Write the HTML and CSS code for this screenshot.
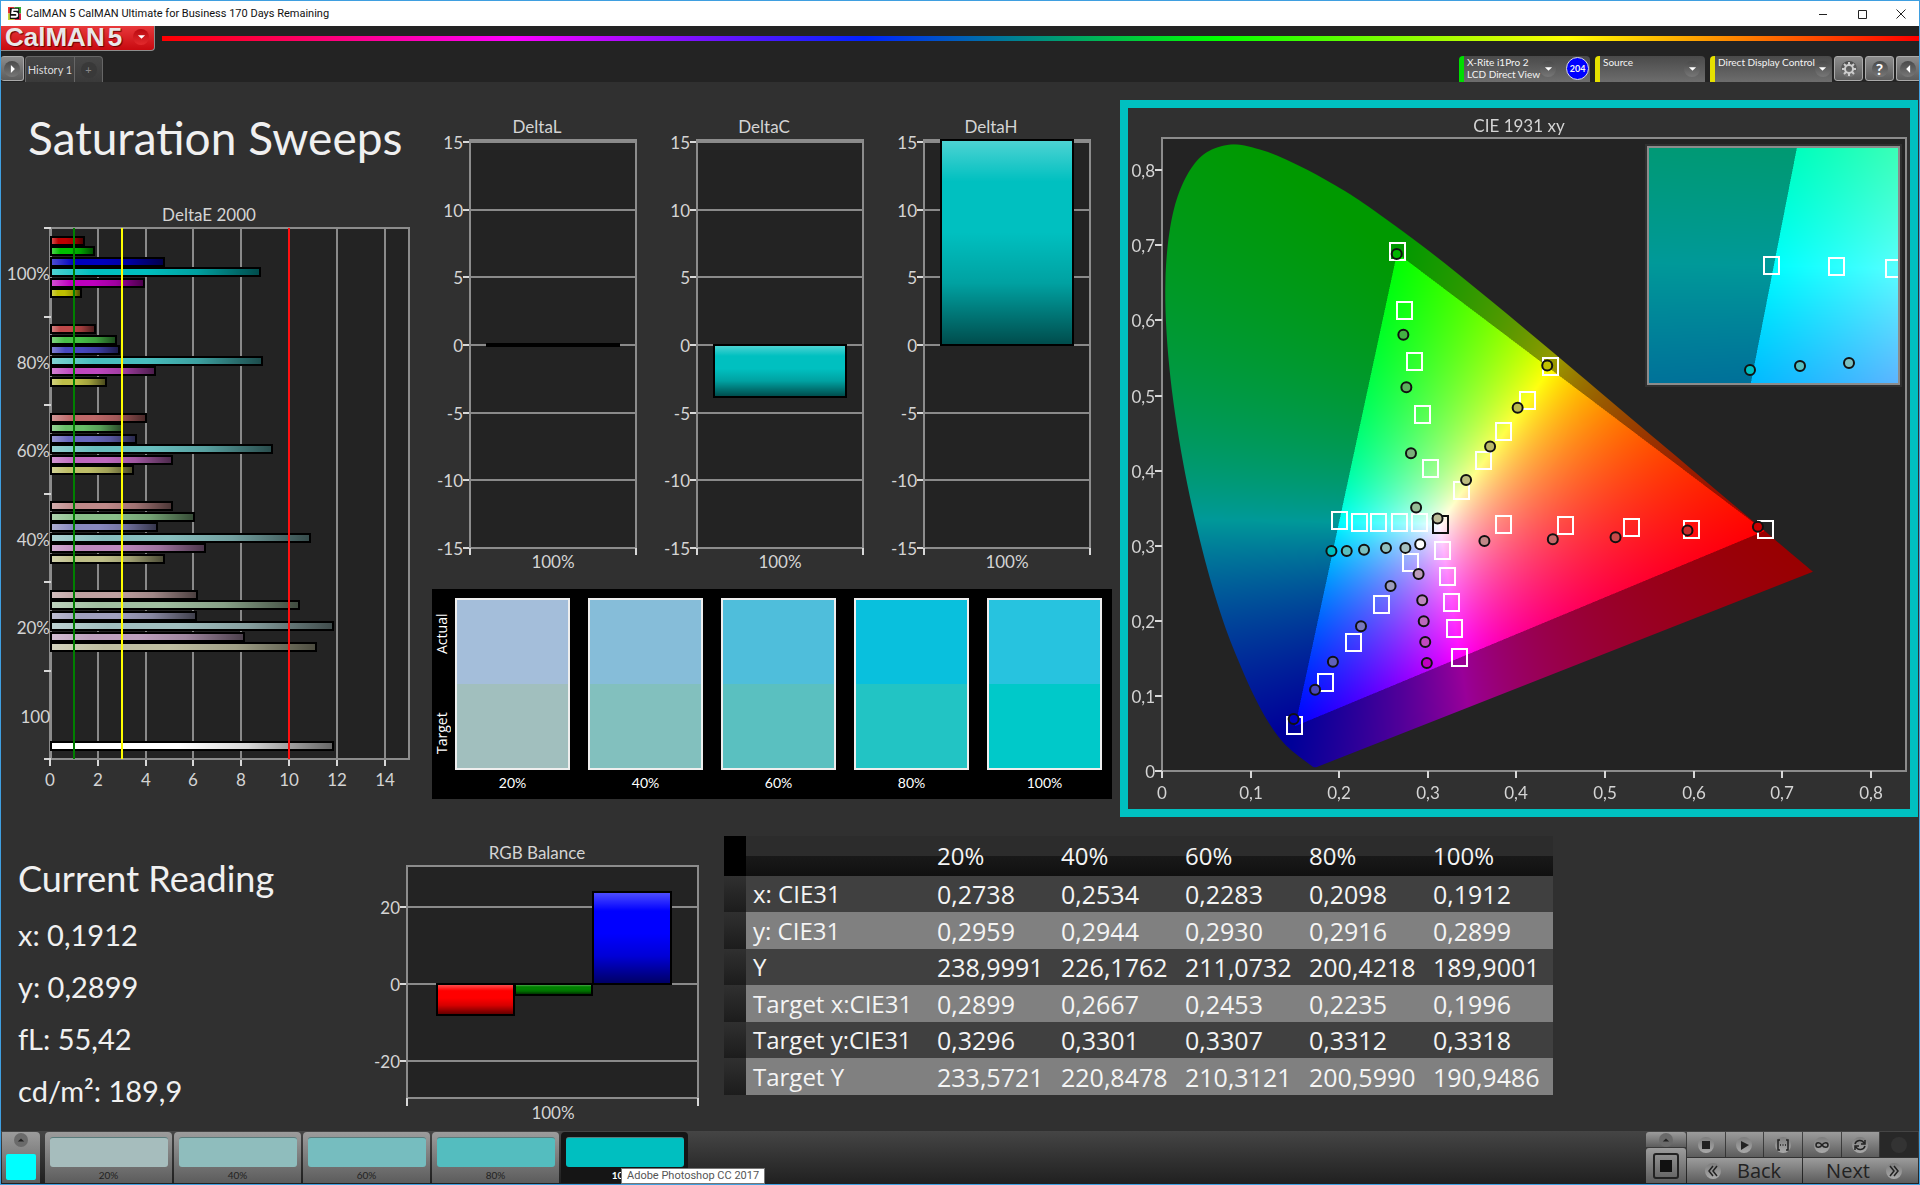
FILE: index.html
```html
<!DOCTYPE html>
<html lang="en">
<head>
<meta charset="utf-8">
<title>CalMAN 5</title>
<link rel="stylesheet" href="styles.css">
</head>
<body>
<header class="titlebar">
  <svg class="app-icon" viewBox="0 0 14 14" aria-hidden="true"><path fill="#e33" d="M0 0h7v7H0z"/><path fill="#3a3" d="M7 0h7v7H7z"/><path fill="#c4d43a" d="M0 7h7v7H0z"/><path fill="#d24" d="M7 7h7v7H7z"/><path fill="#111" d="M2 1h10v12H2z"/><path fill="none" stroke="#fff" stroke-width="2" d="M11 3H5L4.500 6.500H8q2 0 2 2t-2 2H3"/></svg>
  <span class="window-title">CalMAN 5 CalMAN Ultimate for Business 170 Days Remaining</span>
  <div class="window-buttons">
    <button aria-label="Minimize"><svg viewBox="0 0 10 10"><path d="M1 5.500h8"/></svg></button>
    <button aria-label="Maximize"><svg viewBox="0 0 10 10"><path d="M1.500 1.500h8v8h-8z"/></svg></button>
    <button aria-label="Close"><svg viewBox="0 0 10 10"><path d="M.5 .5l9 9M9.500 .5l-9 9"/></svg></button>
  </div>
</header>

<div class="brandbar">
  <button class="brand"><span>CalMAN</span><span>5</span><i class="knob red"><svg viewBox="0 0 10 6"><path d="M1 1h8L5 5z"/></svg></i></button>
  <div class="spectrum"></div>
</div>

<nav class="toolbar">
  <button class="square first" aria-label="Play"><i class="knob"><svg viewBox="0 0 8 10"><path d="M2 0l5 5-5 5z"/></svg></i></button>
  <div class="tabs">
    <button class="tab">History 1</button>
    <button class="tab add" aria-label="Add tab"><i class="knob">+</i></button>
  </div>
  <div class="devices">
    <button class="device green"><span>X-Rite i1Pro 2<br>LCD Direct View</span><i class="knob"><svg viewBox="0 0 10 6"><path d="M1 1h8L5 5z"/></svg></i><b class="count">204</b></button>
    <button class="device source"><span>Source</span><i class="knob"><svg viewBox="0 0 10 6"><path d="M1 1h8L5 5z"/></svg></i></button>
    <button class="device display"><span>Direct Display Control</span><i class="knob"><svg viewBox="0 0 10 6"><path d="M1 1h8L5 5z"/></svg></i></button>
    <button class="square" aria-label="Settings"><i class="knob"><svg class="gear" viewBox="0 0 14 14"><circle cx="7" cy="7" r="4"/><path d="M7 0v3M7 11v3M0 7h3M11 7h3M2 2l2 2M10 10l2 2M12 2l-2 2M4 10l-2 2"/></svg></i></button>
    <button class="square help" aria-label="Help"><i class="knob">?</i></button>
    <button class="square last" aria-label="Collapse"><i class="knob"><svg viewBox="0 0 8 10"><path d="M6 0L1 5l5 5z"/></svg></i></button>
  </div>
</nav>

<main class="workspace">
  <div class="upper">
    <section class="sweeps">
      <h1>Saturation Sweeps</h1>
      <svg class="chart" id="delta-e" viewBox="1 200 430 600" role="img" aria-label="DeltaE 2000"></svg>
    </section>
    <section class="middle">
      <div class="deltas">
        <svg class="chart" id="delta-l" viewBox="431 100 227 489" role="img" aria-label="DeltaL"></svg>
        <svg class="chart" id="delta-c" viewBox="431 100 227 489" role="img" aria-label="DeltaC"></svg>
        <svg class="chart" id="delta-h" viewBox="431 100 227 489" role="img" aria-label="DeltaH"></svg>
      </div>
      <div class="swatches">
        <div class="sides"><span>Target</span><span>Actual</span></div>
        <figure><div class="pair p20"></div><figcaption>20%</figcaption></figure>
        <figure><div class="pair p40"></div><figcaption>40%</figcaption></figure>
        <figure><div class="pair p60"></div><figcaption>60%</figcaption></figure>
        <figure><div class="pair p80"></div><figcaption>80%</figcaption></figure>
        <figure><div class="pair p100"></div><figcaption>100%</figcaption></figure>
      </div>
    </section>
    <section class="cie">
      <canvas id="cie-colors" width="1564" height="1402"></canvas>
      <svg class="chart" id="cie" viewBox="1128 108 782 701" role="img" aria-label="CIE 1931 xy"></svg>
    </section>
  </div>

  <div class="lower">
    <section class="reading">
      <h2>Current Reading</h2>
      <p>x: 0,1912</p>
      <p>y: 0,2899</p>
      <p>fL: 55,42</p>
      <p>cd/m²: 189,9</p>
    </section>
    <svg class="chart" id="rgb" viewBox="360 836 364 290" role="img" aria-label="RGB Balance"></svg>
    <table class="results">
      <thead><tr><th class="grip"></th><th class="name"></th><th>20%</th><th>40%</th><th>60%</th><th>80%</th><th>100%</th></tr></thead>
      <tbody>
        <tr><td class="grip"></td><th>x: CIE31</th><td>0,2738</td><td>0,2534</td><td>0,2283</td><td>0,2098</td><td>0,1912</td></tr>
        <tr><td class="grip"></td><th>y: CIE31</th><td>0,2959</td><td>0,2944</td><td>0,2930</td><td>0,2916</td><td>0,2899</td></tr>
        <tr><td class="grip"></td><th>Y</th><td>238,9991</td><td>226,1762</td><td>211,0732</td><td>200,4218</td><td>189,9001</td></tr>
        <tr><td class="grip"></td><th>Target x:CIE31</th><td>0,2899</td><td>0,2667</td><td>0,2453</td><td>0,2235</td><td>0,1996</td></tr>
        <tr><td class="grip"></td><th>Target y:CIE31</th><td>0,3296</td><td>0,3301</td><td>0,3307</td><td>0,3312</td><td>0,3318</td></tr>
        <tr><td class="grip"></td><th>Target Y</th><td>233,5721</td><td>220,8478</td><td>210,3121</td><td>200,5990</td><td>190,9486</td></tr>
      </tbody>
    </table>
  </div>
</main>

<footer class="dock">
  <button class="current" aria-label="Current colour"><i class="knob"><svg viewBox="0 0 10 6"><path d="M1 5h8L5 1z"/></svg></i><span class="chip"></span></button>
  <div class="patches">
    <button class="patch"><span class="chip c20"></span>20%</button>
    <button class="patch"><span class="chip c40"></span>40%</button>
    <button class="patch"><span class="chip c60"></span>60%</button>
    <button class="patch"><span class="chip c80"></span>80%</button>
    <button class="patch active"><span class="chip c100"></span>100%<span class="tooltip">Adobe Photoshop CC 2017</span></button>
  </div>
  <div class="transport">
    <div class="record">
      <button aria-label="Expand"><i class="knob"><svg viewBox="0 0 10 6"><path d="M1 5h8L5 1z"/></svg></i></button>
      <button class="stop-big" aria-label="Stop"><span></span></button>
    </div>
    <div class="controls">
      <div class="keys">
        <button aria-label="Stop"><i class="knob"><svg viewBox="0 0 14 14"><path d="M3 3h8v8H3z"/></svg></i></button>
        <button aria-label="Play"><i class="knob"><svg viewBox="0 0 14 14"><path d="M4 3l8 4-8 5z"/></svg></i></button>
        <button aria-label="Series"><i class="knob"><svg class="line" viewBox="0 0 14 14"><path d="M4 2H2v10h2M10 2h2v10h-2M4 7h1M6.500 7h1M9 7h1"/></svg></i></button>
        <button aria-label="Continuous"><i class="knob"><svg class="line" viewBox="0 0 14 14"><path d="M7 7C5 4 1 4 1 7s4 3 6 0 6-3 6 0-4 3-6 0z"/></svg></i></button>
        <button aria-label="Refresh"><i class="knob"><svg class="line" viewBox="0 0 14 14"><path d="M2 6c1-4 7-5 9-1M12 2v4H8M12 8c-1 4-7 5-9 1M2 12V8h4"/></svg></i></button>
        <button class="off" aria-label="Unused"><i class="knob"></i></button>
      </div>
      <div class="steps">
        <button class="prev"><i class="knob"><svg class="line" viewBox="0 0 14 14"><path d="M7 2L3 7l4 5M11 2L7 7l4 5"/></svg></i>Back</button>
        <button class="next">Next<i class="knob"><svg class="line" viewBox="0 0 14 14"><path d="M3 2l4 5-4 5M7 2l4 5-4 5"/></svg></i></button>
      </div>
    </div>
  </div>
</footer>
<script src="charts.js"></script>
</body>
</html>
```
FILE: styles.css
```css
* { box-sizing: border-box; }
body { margin: 0; min-height: 100vh; display: flex; flex-direction: column; border: 1px solid #3f9fe0; background: #303030; color: #f0f0f0; font-family: Lato, sans-serif; overflow-x: hidden; }
button { margin: 0; padding: 0; border: 0; background: none; color: inherit; font: inherit; }
h1, h2, p, figure { margin: 0; font-weight: 400; }
svg { display: block; }

.titlebar { height: 25px; display: flex; align-items: center; background: #fff; color: #111; padding-left: 7px; font: 11px/20px Roboto, sans-serif; }
.app-icon { width: 13px; height: 13px; margin-right: 5px; }
.window-buttons { margin-left: auto; display: flex; gap: 20px; padding-right: 9px; }
.window-buttons button { width: 19px; height: 24px; display: grid; place-items: center; }
.window-buttons svg { width: 10px; height: 10px; fill: none; stroke: #222; }

.brandbar { display: flex; height: 26px; background: #232323; gap: 7px; }
.brand { width: 154px; height: 25px; display: flex; align-items: center; gap: 3px; padding: 0 5px 3px 4px; border-radius: 0 0 4px 0; background: linear-gradient(#e8393b, #c8090f); border: 1px solid #8d8d8d; border-width: 0 1px 1px 0; color: #e8e8e8; font: bold 26px/20px "Liberation Sans", sans-serif; overflow: hidden; text-shadow: 1px 1px 1px #600; }
.brand .knob { margin-left: auto; }
.spectrum { flex: 1; height: 5px; margin-top: 10px; background: linear-gradient(90deg, #f00, #f0f 20%, #02f 40%, #0f0 60%, #ff0 80%, #f00); }

.knob { flex: none; width: 16px; height: 16px; border-radius: 50%; display: grid; place-items: center; background: linear-gradient(#4a4a4a, #777); font-style: normal; }
.knob svg { width: 9px; height: 8px; fill: #fff; }
.knob.red { background: linear-gradient(#b90a10, #e3292c); }

.toolbar { display: flex; height: 30px; padding-top: 4px; background: #232323; font-size: 11px; line-height: 12px; }
.square { width: 29px; height: 25px; display: grid; place-items: center; border: 1px solid #aaa; border-radius: 3px; background: linear-gradient(#8c8c8c, #5c5c5c); color: #fff; }
.square.first { width: 23px; border-left: 0; margin-right: 1px; }
.square.last { width: 23px; border-right: 0; border-radius: 3px 0 0 3px; }
.square .gear { width: 14px; height: 14px; fill: none; stroke: #ccc; stroke-width: 2; }
.help { font-size: 16px; font-weight: 700; }
.tabs { display: flex; height: 26px; border: 1px solid #666; border-bottom: 0; border-radius: 4px 4px 0 0; background: linear-gradient(#474747, #3a3a3a); color: #ddd; }
.tab { width: 48px; }
.add { width: 28px; border-left: 1px solid #666; display: grid; place-items: center; color: #888; }
.add .knob { background: #393939; }
.devices { margin-left: auto; display: flex; gap: 2px; }
.device { height: 26px; display: flex; align-items: flex-start; text-align: left; padding-left: 3px; border-left: 5px solid #e6e000; border-radius: 4px 4px 0 0; background: linear-gradient(#4a4a4a, #6d6d6d); color: #f4f4f4; margin-right: 3px; font-size: 10px; }
.device span { flex: 1; white-space: nowrap; }
.device .knob { margin: 5px 5px 0 0; }
.green { width: 131px; border-left-color: #0d0; }
.green .knob { margin-right: 8px; }
.source { width: 110px; }
.display { width: 122px; margin-right: 0; }
.count { flex: none; width: 23px; height: 23px; margin: 1px 2px; border: 1px solid #ddd; border-radius: 50%; background: #00f; font-size: 9px; line-height: 21px; text-align: center; }

.workspace { flex: 1; padding: 18px 1px 0 0; }
.upper { display: grid; grid-template-columns: 430fr 681fr 806fr; align-items: start; }
.upper > * { min-width: 0; }
.chart { width: 100%; height: auto; font-size: 17px; fill: #d4d4d4; }
h1 { height: 100px; padding: 8px 0 0 27px; font-size: 46px; line-height: 60px; white-space: nowrap; }
.deltas { display: grid; grid-template-columns: repeat(3, 1fr); }
.swatches { display: flex; gap: 18px; padding: 9px 10px 0 0; height: 210px; background: #000; margin-left: 1px; color: #fff; font-size: 14px; }
.sides { width: 23px; height: 172px; padding: 16px 0; margin-right: -18px; writing-mode: vertical-rl; transform: rotate(180deg); display: flex; justify-content: space-between; line-height: 20px; font-family: "Open Sans", sans-serif; }
.swatches figure { flex: 1; text-align: center; }
.pair { height: 172px; border: 2px solid #eee; }
.swatches figcaption { line-height: 26px; }
.p20 { background: linear-gradient(#a4beda 50%, #a1bfbe 50%); }
.p40 { background: linear-gradient(#86bdd9 50%, #82c0be 50%); }
.p60 { background: linear-gradient(#4fbedb 50%, #5ac0c0 50%); }
.p80 { background: linear-gradient(#09c0dd 50%, #22c4c4 50%); }
.p100 { background: linear-gradient(#27c3df 50%, #00c9c9 50%); }
.cie { margin-left: 8px; display: grid; border: 8px solid #00c0c0; }
.cie > * { grid-area: 1 / 1; width: 100%; height: auto; }

.lower { display: grid; grid-template-columns: 359fr 364fr 1194fr; align-items: start; margin-top: 19px; }
.reading { padding: 16px 0 0 17px; font-size: 29px; line-height: 52px; }
.reading h2 { font-size: 36px; line-height: 52px; margin-bottom: 5px; }
.results { width: 100%; max-width: 829px; table-layout: fixed; border-collapse: collapse; font: 25px/36px "Open Sans", sans-serif; color: #f4f4f4; }
.results th, .results td { padding: 0; height: 36px; font-weight: 400; text-align: left; }
.results thead th { width: 124px; height: 40px; font-size: 24px; background: linear-gradient(#2c2c2c 50%, #191919 50%, #101010); }
.results thead th:last-child { width: auto; }
.results thead .grip { width: 22px; background: #000; }
.results thead .name { width: 191px; }
.results .grip { background: linear-gradient(#303030, #1c1c1c); }
.results tbody th { padding-left: 7px; font-size: 24px; }
.results tbody tr { background: #404040; }
.results tbody tr:nth-child(even) { background: #808080; }
.results tbody tr:nth-child(even) > * { height: 37px; }

.dock { display: flex; height: 53px; padding: 1px; background: linear-gradient(#454545, #202020); font-size: 10px; }
.dock button { color: #222; background: linear-gradient(#9c9c9c, #5c5c5c); }
.dock .knob { background: linear-gradient(#7c7c7c, #aaa); }
.dock .knob svg { fill: #222; width: 14px; height: 14px; }
.dock .knob .line { fill: none; stroke: #222; stroke-width: 1.500; }
.current { width: 38px; display: flex; flex-direction: column; align-items: center; gap: 7px; padding-top: 1px; border-radius: 0 4px 0 0; margin-right: 5px; }
.dock .current .knob, .dock .record .knob { width: 14px; height: 14px; background: #6a6a6a; }
.dock .current svg, .dock .record svg { width: 8px; height: 6px; }
.current .chip { width: 30px; height: 26px; border-radius: 2px; background: #0ff; }
.patches { display: flex; gap: 2px; }
.patch { position: relative; width: 127px; padding-top: 5px; border-radius: 4px 4px 0 0; line-height: 16px; display: flex; flex-direction: column; align-items: center; }
.dock .active { background: #151515; color: #fff; font-weight: 700; }
.patch .chip { width: 118px; height: 31px; border-radius: 3px; border-top: 1px solid #5a7c7c; }
.c20 { background: #a6bdbd; } .c40 { background: #8fbdbd; } .c60 { background: #76bdbf; } .c80 { background: #54bdbf; } .c100 { background: #00bfc0; }
.tooltip { position: absolute; left: 60px; top: 36px; height: 16px; padding: 0 5px; border: 1px solid #777; background: #fff; color: #555; font: 11px/14px Roboto, sans-serif; white-space: nowrap; }
.transport { margin-left: auto; display: flex; gap: 1px; }
.record { width: 40px; display: grid; grid-template-rows: 15px 1fr; gap: 1px; }
.record button { display: grid; place-items: center; border-radius: 3px 3px 0 0; }
.stop-big span { width: 26px; height: 26px; border: 2px solid #222; border-radius: 3px; padding: 5px; background: #111 content-box; }
.controls { display: grid; grid-template-rows: 25px 25px; gap: 1px; width: 231px; }
.keys { display: grid; grid-template-columns: repeat(6, 1fr); gap: 1px; }
.keys button { display: grid; place-items: center; }
.dock .off { background: #282828; }
.dock .off .knob { background: #333; }
.steps { display: grid; grid-template-columns: 1fr 1fr; gap: 1px; font: 20px/24px "Open Sans", sans-serif; }
.steps button { display: flex; align-items: center; gap: 16px; }
.prev { padding-left: 18px; }
.steps .next { justify-content: flex-end; padding-right: 16px; }

.axis { stroke: #8c8c8c; stroke-width: 2; fill: none; }
.grid { stroke: #8a8a8a; stroke-width: 2; }
.tick { stroke: #d8d8d8; stroke-width: 2; }
.back { fill: #232323; }
.middle-text { text-anchor: middle; }
.end-text { text-anchor: end; }
.bar { stroke: #000; stroke-width: 2; }
.target { fill: none; stroke: #fff; stroke-width: 2; }
.white-target { fill: none; stroke: #111; stroke-width: 2; }
.actual { stroke: #111; stroke-width: 2; }
```
FILE: charts.js
```js
const NS = "http://www.w3.org/2000/svg";
const get = id => document.getElementById(id);

function add(parent, name, attrs, text) {
  const el = document.createElementNS(NS, name);
  for (const key in attrs) el.setAttribute(key, attrs[key]);
  if (text !== undefined) el.textContent = text;
  parent.appendChild(el);
  return el;
}
const line = (p, x1, y1, x2, y2, cls) => add(p, "line", { x1, y1, x2, y2, class: cls });
const text = (p, x, y, s, cls) => add(p, "text", { x, y, class: cls }, s);
const rect = (p, x, y, width, height, attrs) => add(p, "rect", { x, y, width, height, ...attrs });

// Glossy shading laid over every bar
function shade(svg, id, x2, y2) {
  const g = add(add(svg, "defs", {}), "linearGradient", { id, x1: 0, y1: 0, x2, y2 });
  [[0, "#fff", .3], [.2, "#fff", 0], [.2, "#000", 0], [.45, "#000", 0], [.7, "#000", .16], [1, "#000", .6]]
    .forEach(s => add(g, "stop", { offset: s[0], "stop-color": s[1], "stop-opacity": s[2] }));
}
function bar(svg, x, y, w, h, fill, shading) {
  rect(svg, x, y, w, h, { fill, class: "bar" });
  rect(svg, x + 1, y + 1, Math.max(w - 2, 0), Math.max(h - 2, 0), { fill: `url(#${shading})` });
}

// DeltaE 2000
(function () {
  const svg = get("delta-e");
  shade(svg, "shade-e", 1, 0);
  const X = v => Math.round(50 + 23.9 * v), top = 228, step = 88.5, bottom = 759;
  text(svg, 209, 221, "DeltaE 2000", "middle-text");
  rect(svg, 51, top, 358, bottom - top, { class: "back" });
  for (let v = 0; v < 15; v += 2) {
    line(svg, X(v), top, X(v), bottom, "grid");
    line(svg, X(v), bottom, X(v), bottom + 7, "tick");
    text(svg, X(v), 786, v, "middle-text");
  }
  rect(svg, 51, top, 358, bottom - top, { class: "axis" });
  const groups = [
    [1.42, 1.84, 4.78, 8.77, 3.93, 1.3], [1.88, 2.75, 2.87, 8.88, 4.39, 2.36],
    [4.03, 3.03, 3.58, 9.27, 5.09, 3.47], [5.09, 6.03, 4.49, 10.87, 6.49, 4.78],
    [6.16, 10.42, 6.1, 11.83, 8.12, 11.13]
  ];
  const hues = [[1, 0, 0], [0, 1, 0], [0, 0, 1], [0, 1, 1], [1, 0, 1], [1, 1, 0]];
  const low = [0, 72, 104, 136, 160];
  groups.forEach((g, i) => g.forEach((v, j) => {
    const c = hues[j].map(on => on ? 190 : low[i]);
    bar(svg, 51, Math.round(top + step * i + 8.5 + 10.5 * j), X(v) - 51, 8, `rgb(${c})`, "shade-e");
  }));
  bar(svg, 51, 742, X(11.83) - 51, 8, "#fff", "shade-e");
  [[1, "#008000"], [3, "#ffff00"], [10, "#ff1010"]].forEach(l =>
    add(svg, "line", { x1: X(l[0]), x2: X(l[0]), y1: top, y2: bottom, stroke: l[1], "stroke-width": 2 }));
  for (let i = 0; i < 7; i++) line(svg, 44, Math.round(top + step * i), 51, Math.round(top + step * i), "tick");
  ["100%", "80%", "60%", "40%", "20%", "100"].forEach((s, i) => text(svg, 50, 280 + Math.round(step * i), s, "end-text"));
})();

// DeltaL, DeltaC and DeltaH
[["delta-l", "DeltaL", 344, 2], ["delta-c", "DeltaC", 345, 52], ["delta-h", "DeltaH", 140, 205]].forEach(d => {
  const svg = get(d[0]), zero = 345;
  shade(svg, "shade-" + d[0], 0, 1);
  text(svg, 537, 133, d[1], "middle-text");
  rect(svg, 470, 140, 166, 407, { class: "back" });
  for (let v = 15; v >= -15; v -= 5) {
    const y = Math.round(zero - 13.53 * v);
    line(svg, 470, y, 636, y, "grid");
    line(svg, 463, y, 470, y, "tick");
    text(svg, 463, y + 7, v, "end-text");
  }
  rect(svg, 470, 140, 166, 408, { class: "axis" });
  line(svg, 470, 548, 470, 555, "tick");
  line(svg, 636, 548, 636, 555, "tick");
  bar(svg, 487, d[2], 132, d[3], d[0] === "delta-l" ? "#000" : "#00c0c0", "shade-" + d[0]);
  text(svg, 553, 568, "100%", "middle-text");
});

// RGB balance
(function () {
  const svg = get("rgb");
  shade(svg, "shade-rgb", 0, 1);
  text(svg, 537, 859, "RGB Balance", "middle-text");
  rect(svg, 407, 866, 291, 232, { class: "back" });
  [[20, 907], [0, 984], [-20, 1061]].forEach(g => {
    line(svg, 407, g[1], 698, g[1], "grid");
    line(svg, 400, g[1], 407, g[1], "tick");
    text(svg, 400, g[1] + 7, g[0], "end-text");
  });
  rect(svg, 407, 866, 291, 232, { class: "axis" });
  line(svg, 407, 1098, 407, 1106, "tick");
  line(svg, 698, 1098, 698, 1106, "tick");
  bar(svg, 437, 984, 77, 31, "#f00", "shade-rgb");
  bar(svg, 515, 984, 77, 11, "#008000", "shade-rgb");
  bar(svg, 593, 892, 78, 92, "#00f", "shade-rgb");
  text(svg, 553, 1119, "100%", "middle-text");
})();

// CIE 1931 chromaticity diagram
const PX = x => 1162 + 886 * x, PY = y => 771 - 751 * y;
const locus = [.1741,.005,.1714,.0051,.1689,.0069,.1644,.0109,.1566,.0177,.144,.0297,.1355,.0399,.1241,.0578,.1096,.0868,.0913,.1327,.0687,.2007,.0454,.295,.0235,.4127,.0082,.5384,.0039,.6548,.0139,.7502,.0389,.812,.0743,.8338,.1142,.8262,.1547,.8059,.1929,.7816,.2296,.7543,.3016,.6923,.3731,.6245,.4441,.5547,.5125,.4866,.5752,.4242,.627,.3725,.6658,.334,.6915,.3083,.719,.2809,.7347,.2653];

(function () {
  const canvas = get("cie-colors"), ctx = canvas.getContext("2d");
  // The bitmap is drawn at twice the chart's units
  function layer(x, y, w, h, fromX, fromY) {
    const c = document.createElement("canvas");
    c.width = w * 2; c.height = h * 2;
    const g = c.getContext("2d"), img = g.createImageData(c.width, c.height), d = img.data;
    for (let j = 0, k = 0; j < c.height; j++) for (let i = 0; i < c.width; i++, k += 4) {
      const cx = fromX(x + i / 2), cy = fromY(y + j / 2), cz = 1 - cx - cy;
      let r = 2.4935 * cx - .9314 * cy - .4027 * cz;
      let gr = -.8295 * cx + 1.7627 * cy + .0236 * cz;
      let b = .0358 * cx - .0762 * cy + .9569 * cz;
      const inside = Math.min(r, gr, b) >= 0;
      const m = Math.max(r, gr, b), s = (inside ? 255 : 153) / m;
      d[k] = Math.max(r, 0) * s; d[k + 1] = Math.max(gr, 0) * s; d[k + 2] = Math.max(b, 0) * s; d[k + 3] = 255;
    }
    g.putImageData(img, 0, 0);
    return c;
  }
  ctx.scale(2, 2);
  ctx.translate(-1128, -108);
  ctx.fillStyle = "#232323";
  ctx.fillRect(1162, 138, 744, 633);
  ctx.save();
  ctx.beginPath();
  // Catmull-Rom smoothing of the tabulated locus
  const n = locus.length / 2, P = i => { i = Math.min(Math.max(i, 0), n - 1); return [PX(locus[2 * i]), PY(locus[2 * i + 1])]; };
  ctx.moveTo(...P(0));
  for (let i = 0; i < n - 1; i++) {
    const a = P(i - 1), b = P(i), c = P(i + 1), e = P(i + 2);
    ctx.bezierCurveTo(b[0] + (c[0] - a[0]) / 6, b[1] + (c[1] - a[1]) / 6, c[0] - (e[0] - b[0]) / 6, c[1] - (e[1] - b[1]) / 6, c[0], c[1]);
  }
  ctx.closePath();
  ctx.clip();
  ctx.drawImage(layer(1162, 138, 700, 633, x => (x - 1162) / 886, y => (771 - y) / 751), 1162, 138, 700, 633);
  ctx.restore();
  ctx.fillStyle = "#303030";
  ctx.fillRect(1645, 144, 257, 243);
  ctx.drawImage(layer(1648, 147, 251, 237, x => .1996 + (x - 1773.5) / 2690, y => .3318 - (y - 265.5) / 2509), 1648, 147, 251, 237);
})();

(function () {
  const svg = get("cie");
  text(svg, 1519, 132, "CIE 1931 xy", "middle-text");
  rect(svg, 1162, 138, 744, 633, { class: "axis" });
  for (let i = 0; i < 9; i++) {
    const label = i ? "0," + i : "0", x = Math.round(PX(i / 10)), y = Math.round(PY(i / 10));
    line(svg, x, 771, x, 778, "tick");
    line(svg, 1155, y, 1162, y, "tick");
    text(svg, x, 799, label, "middle-text");
    text(svg, 1155, y + 7, label, "end-text");
  }
  rect(svg, 1648, 147, 251, 237, { class: "axis" });
  const square = (x, y, cls) => rect(svg, Math.round(x) - 7, Math.round(y) - 8, 15, 17, { class: cls });
  const dot = (x, y, fill) => add(svg, "circle", { cx: x, cy: y, r: 5, fill, class: "actual" });
  [.265,.693,.2735,.614,.284,.546,.2937,.476,.3023,.404,.438,.539,.4117,.4946,.3852,.453,.3622,.4139,.338,.3742,
   .1998,.3344,.2223,.332,.2442,.332,.2672,.332,.2897,.332,.3847,.3295,.4543,.3271,.5298,.3246,.5971,.3228,.6801,.3222,
   .2799,.2788,.247,.2225,.2154,.1718,.1837,.118,.1486,.0617,.3161,.2947,.3213,.2598,.3265,.225,.33,.1907,.3357,.1522]
    .forEach((v, i, a) => { if (i % 2 === 0) square(PX(v), PY(a[i + 1]), "target"); });
  square(PX(.3133), PY(.3295), "white-target");
  [[.2649,.6884,"#00b400"],[.2724,.5808,"#44b044"],[.2758,.5111,"#5cb05c"],[.281,.4231,"#7ab07a"],[.2868,.3509,"#96bc96"],
   [.311,.3362,"#bcbc98"],[.3432,.3876,"#bcbc80"],[.3703,.4322,"#b8b868"],[.4014,.4836,"#b8b84c"],[.4348,.5398,"#c0c000"],
   [.1912,.2929,"#00c0c0"],[.2085,.2929,"#58c0c0"],[.228,.2947,"#7ac0c0"],[.2528,.2971,"#90c0c0"],[.2747,.2971,"#a4c0c0"],[.2914,.302,"#fff"],
   [.3639,.3063,"#c08888"],[.4411,.3087,"#c46868"],[.5119,.3112,"#c84848"],[.5931,.3204,"#c82c2c"],[.6726,.3252,"#c80000"],
   [.2896,.2623,"#bc9cbc"],[.2937,.2274,"#bc88bc"],[.2954,.1993,"#bc68bc"],[.2971,.1718,"#c048c0"],[.2989,.1437,"#c000c0"],
   [.258,.2464,"#9c9cbc"],[.2246,.1926,"#7878bc"],[.1929,.1455,"#6060b8"],[.1728,.1082,"#4848b8"],[.1486,.0691,"#0000c0"]]
    .forEach(d => dot(PX(d[0]), PY(d[1]), d[2]));
  // Magnified view around the selected target
  square(1771, 265, "target");
  square(1836, 266, "target");
  add(svg, "path", { d: "M1898 260h-12v17h12", class: "target" });
  dot(1750, 370, "#00c0c0");
  dot(1800, 366, "#58c0c0");
  dot(1849, 363, "#7ac0c0");
})();
```
